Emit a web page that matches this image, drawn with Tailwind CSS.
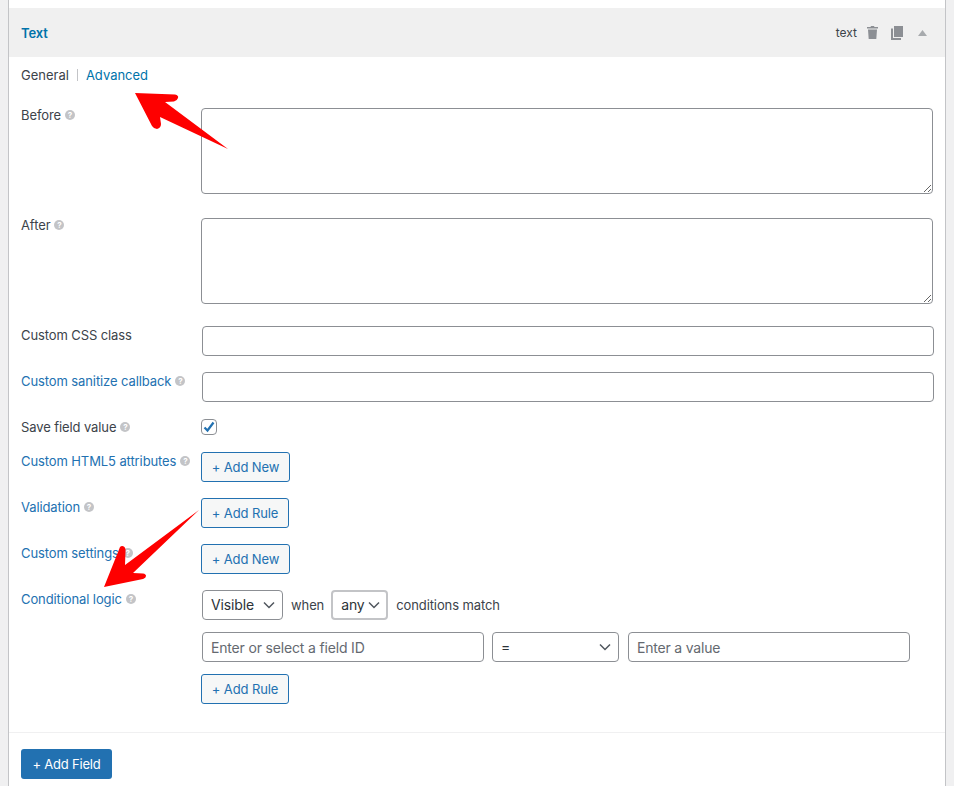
<!DOCTYPE html>
<html lang="en">
<head>
<meta charset="utf-8">
<title>Text field settings</title>
<script src="https://cdn.jsdelivr.net/npm/@tailwindcss/browser@4"></script>
</head>
<body class="bg-[#f0f0f1] font-[Inter,sans-serif] text-[13px] leading-5 tracking-[-0.1px] text-[#3c434a] overflow-hidden">
<div class="relative h-[786px] w-[954px] overflow-hidden">
  <div class="ml-2 w-[938px] h-full bg-white border-x border-[#c3c4c7] pt-2">
    <div class="h-[49px] bg-[#f0f0f0] flex items-center pl-3 pr-[18px]">
      <span class="font-semibold text-[#0073aa]">Text</span>
      <span class="ml-auto text-[12px] tracking-normal">text</span>
      <svg class="ml-[10px] w-[11px] h-[13px]" viewBox="0 0 11 13" fill="#8c8f94"><path d="M4 0h3l.5 1H11v1.500H0V1h3.500zM1 3.500h9L9.300 13H1.700z"/></svg>
      <svg class="ml-[13px] w-[12px] h-[14px]" viewBox="0 0 12 14" fill="#8c8f94"><path d="M3 0h9v11H3z"/><path d="M0 2.500h2V12h8v2H0z"/></svg>
      <svg class="ml-[15px] w-[9px] h-[6px]" viewBox="0 0 9 6" fill="#a7aaad"><path d="M4.500 0l4.500 6H0z"/></svg>
    </div>

    <div class="h-[51px] pl-3 pt-2 flex items-start tracking-normal">
      <span>General</span>
      <span class="mx-2 mt-[4px] h-3 w-px bg-[#c3c4c7]"></span>
      <a class="text-[#0073aa]">Advanced</a>
    </div>

    <div class="flex flex-col">
      <div class="flex h-[86px] mb-6">
        <div class="w-[192px] pl-3 -mt-[3px] flex items-start"><span>Before</span><span class="ml-1 mt-[5px] w-[10px] h-[10px] rounded-full bg-[#c3c4c7] text-white text-[8px] leading-[10px] font-bold text-center">?</span></div>
        <textarea class="w-[732px] h-[86px] border border-[#8c8f94] rounded-[4px] block"></textarea>
      </div>
      <div class="flex h-[86px] mb-[22px]">
        <div class="w-[192px] pl-3 -mt-[3px] flex items-start"><span>After</span><span class="ml-1 mt-[5px] w-[10px] h-[10px] rounded-full bg-[#c3c4c7] text-white text-[8px] leading-[10px] font-bold text-center">?</span></div>
        <textarea class="w-[732px] h-[86px] border border-[#8c8f94] rounded-[4px] block"></textarea>
      </div>
      <div class="flex h-[30px] mb-4">
        <div class="w-[193px] pl-3 -mt-px"><span>Custom CSS class</span></div>
        <input class="w-[732px] h-[30px] border border-[#8c8f94] rounded-[4px]" type="text">
      </div>
      <div class="flex h-[30px] mb-4">
        <div class="w-[193px] pl-3 -mt-px flex items-start"><span class="text-[#2271b1]">Custom sanitize callback</span><span class="ml-1 mt-[5px] w-[10px] h-[10px] rounded-full bg-[#c3c4c7] text-white text-[8px] leading-[10px] font-bold text-center">?</span></div>
        <input class="w-[732px] h-[30px] border border-[#8c8f94] rounded-[4px]" type="text">
      </div>
      <div class="flex h-[18px] mb-4">
        <div class="w-[192px] pl-3 -mt-px flex items-start"><span>Save field value</span><span class="ml-1 mt-[5px] w-[10px] h-[10px] rounded-full bg-[#c3c4c7] text-white text-[8px] leading-[10px] font-bold text-center">?</span></div>
        <div class="relative w-4 h-4 mt-px">
          <input type="checkbox" checked class="appearance-none block w-4 h-4 border border-[#8c8f94] rounded-[4px] bg-white">
          <svg class="absolute left-[1px] top-[1px] w-[14px] h-[14px] pointer-events-none" viewBox="0 0 14 14" fill="none" stroke="#2271b1" stroke-width="2.200"><path d="M2.500 7.500l3 3L11.500 2.500"/></svg>
        </div>
      </div>
      <div class="flex h-[30px] mb-4">
        <div class="w-[192px] pl-3 -mt-px flex items-start"><span class="text-[#2271b1]">Custom HTML5 attributes</span><span class="ml-1 mt-[5px] w-[10px] h-[10px] rounded-full bg-[#c3c4c7] text-white text-[8px] leading-[10px] font-bold text-center">?</span></div>
        <button class="w-[89px] h-[30px] border border-[#2271b1] rounded-[3px] bg-[#f6f7f7] text-[#2271b1]">+ Add New</button>
      </div>
      <div class="flex h-[30px] mb-4">
        <div class="w-[192px] pl-3 -mt-px flex items-start"><span class="text-[#2271b1]">Validation</span><span class="ml-1 mt-[5px] w-[10px] h-[10px] rounded-full bg-[#c3c4c7] text-white text-[8px] leading-[10px] font-bold text-center">?</span></div>
        <button class="w-[88px] h-[30px] border border-[#2271b1] rounded-[3px] bg-[#f6f7f7] text-[#2271b1]">+ Add Rule</button>
      </div>
      <div class="flex h-[30px] mb-4">
        <div class="w-[192px] pl-3 -mt-px flex items-start"><span class="text-[#2271b1]">Custom settings</span><span class="ml-1 mt-[5px] w-[10px] h-[10px] rounded-full bg-[#c3c4c7] text-white text-[8px] leading-[10px] font-bold text-center">?</span></div>
        <button class="w-[89px] h-[30px] border border-[#2271b1] rounded-[3px] bg-[#f6f7f7] text-[#2271b1]">+ Add New</button>
      </div>
      <div class="flex">
        <div class="w-[192px] pl-3 -mt-px flex items-start"><span class="text-[#2271b1]">Conditional logic</span><span class="ml-1 mt-[5px] w-[10px] h-[10px] rounded-full bg-[#c3c4c7] text-white text-[8px] leading-[10px] font-bold text-center">?</span></div>
        <div class="flex flex-col">
          <div class="flex items-center h-[30px] mb-3 pl-px">
            <div class="relative w-[81px] h-[30px]">
              <select class="appearance-none w-full h-full border border-[#8c8f94] rounded-[4px] pl-2 text-[14px] tracking-[-0.15px] text-[#2c3338] bg-white"><option>Visible</option></select>
              <svg class="absolute right-[8px] top-[11px] w-[12px] h-[8px] pointer-events-none" viewBox="0 0 12 8" fill="none" stroke="#50575e" stroke-width="1.500"><path d="M1 1.500l5 5 5-5"/></svg>
            </div>
            <span class="ml-2">when</span>
            <div class="relative ml-[7px] w-[57px] h-[30px]">
              <select class="appearance-none w-full h-full border-2 border-[#c3c4c7] rounded-[4px] pl-2 text-[14px] tracking-[-0.15px] text-[#2c3338] bg-white"><option>any</option></select>
              <svg class="absolute right-[8px] top-[11px] w-[12px] h-[8px] pointer-events-none" viewBox="0 0 12 8" fill="none" stroke="#50575e" stroke-width="1.500"><path d="M1 1.500l5 5 5-5"/></svg>
            </div>
            <span class="ml-2">conditions match</span>
          </div>
          <div class="flex items-center h-[30px] mb-3 pl-px">
            <input class="w-[282px] h-[30px] border border-[#8c8f94] rounded-[4px] pl-2 text-[14px] tracking-[-0.17px] placeholder:text-[#646970]" type="text" placeholder="Enter or select a field ID">
            <div class="relative ml-2 w-[127px] h-[30px]">
              <select class="appearance-none w-full h-full border border-[#8c8f94] rounded-[4px] pl-2 text-[14px] text-[#2c3338] bg-white"><option>=</option></select>
              <svg class="absolute right-[8px] top-[11px] w-[12px] h-[8px] pointer-events-none" viewBox="0 0 12 8" fill="none" stroke="#50575e" stroke-width="1.500"><path d="M1 1.500l5 5 5-5"/></svg>
            </div>
            <input class="ml-[9px] w-[282px] h-[30px] border border-[#8c8f94] rounded-[4px] pl-[8px] text-[14px] tracking-[-0.2px] placeholder:text-[#646970]" type="text" placeholder="Enter a value">
          </div>
          <button class="w-[88px] h-[30px] border border-[#2271b1] rounded-[3px] bg-[#f6f7f7] text-[#2271b1]">+ Add Rule</button>
        </div>
      </div>
    </div>

    <div class="mt-7 border-t border-[#f0f0f1] pt-4 pl-3">
      <button class="w-[91px] h-[30px] rounded-[3px] bg-[#2271b1] text-white tracking-[-0.2px]">+ Add Field</button>
    </div>
  </div>

  <svg class="absolute left-0 top-0 pointer-events-none" width="954" height="786" viewBox="0 0 954 786">
    <path d="M135 93 L175 94.500 Q179 95.500 178 98 Q177 101 174 101.500 L165 102 L228 149 L160 117 L161 124 Q161 128 157 129 Q154 129 152 126 Z" fill="#fe0000"/>
    <path d="M104 587 L120 547 Q122 545 124.500 547 Q126 549 125.500 551 L125 565 L199 510 L133 573 L143 573.500 Q146 574 146 576 Q146 578 143 579 Z" fill="#fe0000"/>
  </svg>
</div>
</body>
</html>
